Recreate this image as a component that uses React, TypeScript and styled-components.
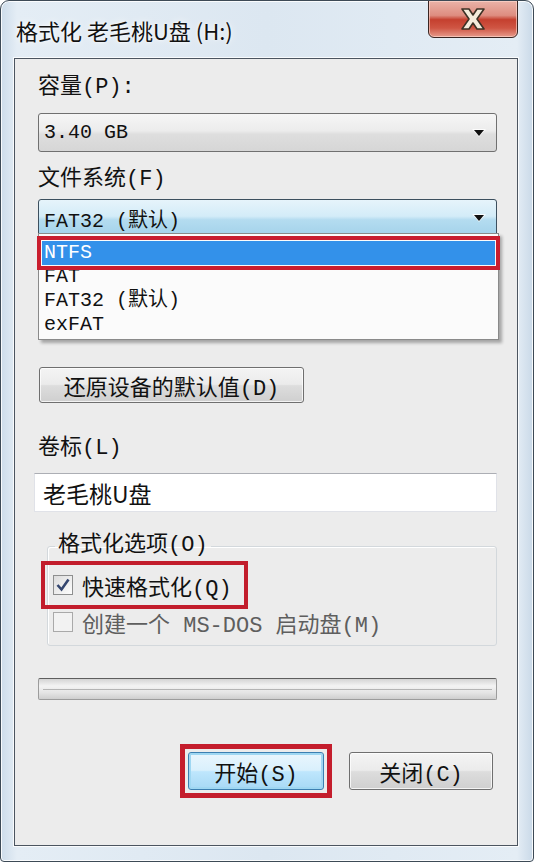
import styled, { createGlobalStyle } from 'styled-components';

const GlobalStyle = createGlobalStyle`
  html, body {
    margin: 0;
    padding: 0;
    background: #ffffff;
  }
`;

const mono = `"Liberation Mono", "Noto Sans CJK SC", monospace`;
const sans = `"Noto Sans CJK SC", "Noto Sans", sans-serif`;

const fsOptions = ['NTFS', 'FAT', 'FAT32 (默认)', 'exFAT'];

function ArrowIcon() {
  return (
    <svg width="16" height="12" viewBox="0 0 16 12">
      <path d="M1 2 L15 2 L8 10 Z" fill="#ffffff" opacity="0.8" />
      <path d="M3 3 L13 3 L8 9 Z" fill="#111111" />
    </svg>
  );
}

function CloseIcon() {
  return (
    <svg width="34" height="26" viewBox="0 0 34 26">
      <path
        d="M6 3 L13 3 L17 9 L21 3 L28 3 L21 13 L28 23 L21 23 L17 17 L13 23 L6 23 L13 13 Z"
        fill="#f4ecdc"
        stroke="#3e3226"
        strokeWidth="1.6"
        strokeLinejoin="round"
      />
    </svg>
  );
}

function CheckIcon() {
  return (
    <svg width="16" height="16" viewBox="0 0 16 16">
      <path d="M2.5 8 L6.5 12.5 L13.5 2.5" fill="none" stroke="#34466f" strokeWidth="2.6" />
    </svg>
  );
}

function App() {
  return (
    <>
      <GlobalStyle />
      <Window>
        <TitleBar>
          <Title>格式化 老毛桃U盘 (H:)</Title>
          <CloseButton>
            <CloseIcon />
          </CloseButton>
        </TitleBar>
        <Client>
          <Label>容量(P):</Label>
          <Combo $gap={13} $height={39}>
            <span>3.40 GB</span>
            <ArrowIcon />
          </Combo>
          <Label $gap={16}>文件系统(F)</Label>
          <ComboWrap>
            <Combo $height={38} $focused>
              <span>FAT32 (默认)</span>
              <ArrowIcon />
            </Combo>
            <DropList>
              {fsOptions.map((opt, i) => (
                <DropItem key={opt} $selected={i === 0}>
                  {opt}
                </DropItem>
              ))}
            </DropList>
          </ComboWrap>
          <RestoreButton>还原设备的默认值(D)</RestoreButton>
          <Label $gap={34}>卷标(L)</Label>
          <TextInput>老毛桃U盘</TextInput>
          <GroupBox>
            <GroupLegend>格式化选项(O)</GroupLegend>
            <CheckRow $highlight>
              <CheckBox>
                <CheckIcon />
              </CheckBox>
              快速格式化(Q)
            </CheckRow>
            <CheckRow $disabled>
              <CheckBox $disabled />
              创建一个 MS-DOS 启动盘(M)
            </CheckRow>
          </GroupBox>
          <Progress>
            <ProgressLine />
          </Progress>
          <ButtonRow>
            <RedFrame>
              <DialogButton $primary $width={136}>
                开始(S)
              </DialogButton>
            </RedFrame>
            <DialogButton $width={144}>关闭(C)</DialogButton>
          </ButtonRow>
        </Client>
      </Window>
    </>
  );
}

export default App;

const Window = styled.div`
  width: 534px;
  height: 862px;
  box-sizing: border-box;
  display: flex;
  flex-direction: column;
  border: 1px solid #3d4a56;
  border-radius: 9px 9px 4px 4px;
  background: linear-gradient(90deg, #cddcea 0%, #e4edf5 3%, #dce7f1 50%, #e4edf5 97%, #c9d9e8 100%);
  box-shadow: inset 0 0 0 1px rgba(255, 255, 255, 0.85);
  overflow: hidden;
`;

const TitleBar = styled.div`
  height: 57px;
  flex-shrink: 0;
  display: flex;
  justify-content: space-between;
  align-items: flex-start;
  padding: 0 15px 0 15px;
`;

const Title = styled.div`
  margin-top: 14px;
  font-family: ${sans};
  font-size: 22px;
  line-height: 30px;
  color: #111111;
  text-shadow: 0 0 8px rgba(255, 255, 255, 0.9), 0 0 3px rgba(255, 255, 255, 0.9);
`;

const CloseButton = styled.div`
  width: 90px;
  height: 38px;
  margin-top: -1px;
  box-sizing: border-box;
  display: flex;
  align-items: center;
  justify-content: center;
  border: 1px solid #3b2623;
  border-radius: 0 0 6px 6px;
  background: linear-gradient(
    #eab3a8 0%,
    #de8d80 40%,
    #c5402f 52%,
    #cf5543 75%,
    #e79b8c 100%
  );
  box-shadow: inset 0 0 0 1px rgba(255, 220, 210, 0.6);
`;

const Client = styled.div`
  flex: 1;
  margin: 0 15px 15px 13px;
  display: flex;
  flex-direction: column;
  align-items: flex-start;
  padding: 17px 20px 0 23px;
  background: #ececec;
  border: 1px solid #4c5560;
  box-shadow: 0 0 0 1px rgba(255, 255, 255, 0.8);
`;

const Label = styled.div<{ $gap?: number }>`
  margin-top: ${(p) => p.$gap ?? 0}px;
  font-family: ${mono};
  font-size: 22px;
  line-height: 24px;
  color: #111111;
`;

const ComboWrap = styled.div`
  position: relative;
  margin-top: 7px;
  align-self: stretch;
`;

const Combo = styled.div<{ $gap?: number; $height: number; $focused?: boolean }>`
  margin-top: ${(p) => p.$gap ?? 0}px;
  height: ${(p) => p.$height}px;
  align-self: stretch;
  box-sizing: border-box;
  display: flex;
  align-items: center;
  justify-content: space-between;
  padding: 0 9px 0 5px;
  border: 1px solid ${(p) => (p.$focused ? '#3c4f5e' : '#707070')};
  border-radius: 3px;
  background: ${(p) =>
    p.$focused
      ? 'linear-gradient(#e6f4fb 0%, #d3ecf8 45%, #b4dcf0 55%, #a3d2ea 100%)'
      : 'linear-gradient(#f6f6f6 0%, #ececec 45%, #dedede 55%, #d6d6d6 100%)'};
  font-family: ${mono};
  font-size: 20px;
  color: #111111;
`;

const DropList = styled.div`
  position: absolute;
  left: 0;
  top: 34px;
  width: 461px;
  box-sizing: border-box;
  padding: 7px 3px 2px 3px;
  background: #fbfbfb;
  border: 1px solid #8a8a8a;
  box-shadow: 3px 3px 3px rgba(0, 0, 0, 0.3);
  z-index: 2;
`;

const DropItem = styled.div<{ $selected?: boolean }>`
  height: 24px;
  line-height: 24px;
  padding-left: 2px;
  font-family: ${mono};
  font-size: 20px;
  color: ${(p) => (p.$selected ? '#ffffff' : '#111111')};
  background: ${(p) => (p.$selected ? '#3391ea' : 'transparent')};
  outline: ${(p) => (p.$selected ? '4px solid #c91d2e' : 'none')};
  outline-offset: 1px;
`;

const buttonFace = `
  box-sizing: border-box;
  display: flex;
  align-items: center;
  justify-content: center;
  border: 1px solid #6f6f6f;
  border-radius: 3px;
  background: linear-gradient(#f4f4f4 0%, #ebebeb 48%, #dddddd 52%, #cfcfcf 100%);
  box-shadow: inset 0 0 0 1px rgba(255, 255, 255, 0.75);
  font-family: ${mono};
  font-size: 22px;
  color: #111111;
`;

const RestoreButton = styled.div`
  ${buttonFace}
  margin-top: 130px;
  margin-left: 1px;
  width: 265px;
  height: 36px;
`;

const TextInput = styled.div`
  margin-top: 12px;
  margin-left: -4px;
  align-self: stretch;
  height: 39px;
  box-sizing: border-box;
  display: flex;
  align-items: center;
  padding-left: 8px;
  background: #ffffff;
  border: 1px solid #e0e2e8;
  border-top-color: #acaeb4;
  font-family: ${sans};
  font-size: 23px;
  color: #111111;
`;

const GroupBox = styled.fieldset`
  margin: 22px 0 0 9px;
  align-self: stretch;
  min-width: 0;
  padding: 0 0 11px 5px;
  border: 1px solid #d3d8dc;
  border-radius: 3px;
  box-shadow: inset 1px 1px 0 #ffffff;
  display: flex;
  flex-direction: column;
  gap: 13px;
`;

const GroupLegend = styled.legend`
  margin-left: 2px;
  padding: 0 3px;
  font-family: ${mono};
  font-size: 22px;
  line-height: 24px;
  color: #111111;
`;

const CheckRow = styled.div<{ $highlight?: boolean; $disabled?: boolean }>`
  margin-top: ${(p) => (p.$highlight ? 15 : 0)}px;
  height: 24px;
  align-self: flex-start;
  display: flex;
  align-items: center;
  gap: 9px;
  padding-right: 4px;
  font-family: ${mono};
  font-size: 22px;
  color: ${(p) => (p.$disabled ? '#5e5e5e' : '#111111')};
  outline: ${(p) => (p.$highlight ? '4px solid #c21d2c' : 'none')};
  outline-offset: 8px;
`;

const CheckBox = styled.div<{ $disabled?: boolean }>`
  width: 20px;
  height: 20px;
  box-sizing: border-box;
  display: flex;
  align-items: center;
  justify-content: center;
  border: 1px solid ${(p) => (p.$disabled ? '#a9a9a9' : '#8e8f8f')};
  background: ${(p) =>
    p.$disabled ? '#f2f2f2' : 'linear-gradient(135deg, #dcdcdc, #fdfdfd)'};
`;

const Progress = styled.div`
  margin-top: 32px;
  align-self: stretch;
  height: 22px;
  box-sizing: border-box;
  display: flex;
  align-items: center;
  padding: 0 4px;
  border: 1px solid #9c9c9c;
  border-top-color: #5e5e5e;
  border-radius: 2px;
  background: linear-gradient(#d4d4d4 0%, #f3f3f3 35%, #e4e4e4 70%, #cfcfcf 100%);
`;

const ProgressLine = styled.div`
  flex: 1;
  height: 1px;
  background: #b4b4b4;
`;

const ButtonRow = styled.div`
  margin-top: 44px;
  align-self: stretch;
  display: flex;
  justify-content: flex-end;
  align-items: center;
  gap: 17px;
  padding-right: 4px;
`;

const RedFrame = styled.div`
  display: flex;
  padding: 3px;
  border: 5px solid #c41d2c;
`;

const DialogButton = styled.div<{ $primary?: boolean; $width: number }>`
  ${buttonFace}
  width: ${(p) => p.$width}px;
  height: 38px;
  ${(p) =>
    p.$primary &&
    `
    border-color: #3c7fb1;
    background: linear-gradient(#eaf6fd 0%, #d9f0fc 48%, #bee6fd 52%, #a7d9f5 100%);
    box-shadow: inset 0 0 0 2px #9fd7f2;
  `}
`;
